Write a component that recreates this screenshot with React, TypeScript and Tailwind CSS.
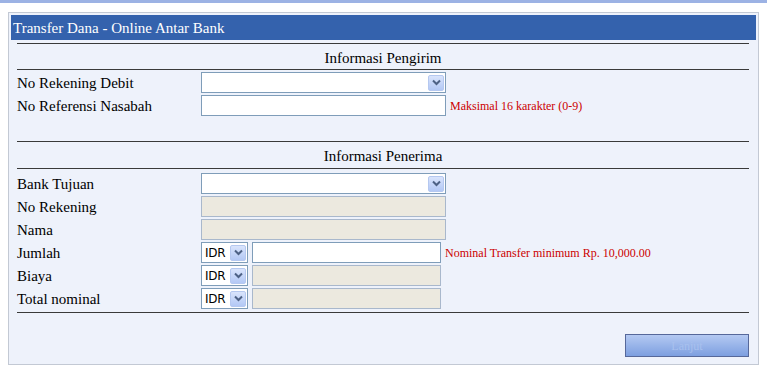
import React from "react";

function Arrow() {
  return (
    <div className="w-[16px] h-[16px] rounded-[2px] border border-[#b5c8f0] bg-gradient-to-b from-[#d9e4fc] to-[#b3c8f5] flex items-center justify-center">
      <svg width="9" height="7" viewBox="0 0 9 7">
        <path d="M1 1.5 L4.5 5 L8 1.5" fill="none" stroke="#4d6185" strokeWidth="2" />
      </svg>
    </div>
  );
}

function Select({ w, text }: { w: string; text?: string }) {
  return (
    <div className={`${w} h-[21px] border border-[#7f9db9] bg-white flex items-center justify-between pl-[3px] pr-[1px]`}>
      <span className="text-[12px] text-black font-['DejaVu_Sans',sans-serif] tracking-[-0.3px]">{text}</span>
      <Arrow />
    </div>
  );
}

function Input({ w, disabled }: { w: string; disabled?: boolean }) {
  return (
    <div
      className={`${w} h-[21px] border ${disabled ? "border-[#a9b8cc] bg-[#ece9df]" : "border-[#7f9db9] bg-white"}`}
    />
  );
}

function Row({ label, children }: { label: string; children: React.ReactNode }) {
  return (
    <div className="h-[23px] flex items-center">
      <div className="w-[184px] text-[15px] text-black leading-none pt-[1px]">{label}</div>
      <div className="flex items-center">{children}</div>
    </div>
  );
}

function Line() {
  return <div className="h-px bg-[#3a3a3a]" />;
}

function Title({ text }: { text: string }) {
  return (
    <div className="h-[25px] flex items-center justify-center text-[15px] text-black pt-[3px]">{text}</div>
  );
}

function Note({ text }: { text: string }) {
  return <span className="ml-[4px] text-[12px] text-[#cc0000] whitespace-nowrap">{text}</span>;
}

export default function App() {
  return (
    <div className="w-[767px] h-[372px] bg-white overflow-hidden font-['Liberation_Serif','Times_New_Roman',serif]">
      <div className="h-[3px] bg-[#9cb2e4]" />
      <div className="ml-[8px] mt-[9px] w-[751px] h-[353px] border border-[#c3c9d4] bg-[#eef2fb] p-[2px]">
        <div className="h-[25px] bg-[#3462ad] flex items-center pl-[2px] pt-[1px] text-[15px] text-white">
          Transfer Dana - Online Antar Bank
        </div>
        <div className="pl-[6px] pr-[7px] pt-[3px]">
          <Line />
          <Title text="Informasi Pengirim" />
          <Line />
          <div className="pt-[1px]">
            <Row label="No Rekening Debit">
              <Select w="w-[245px]" />
            </Row>
            <Row label="No Referensi Nasabah">
              <Input w="w-[245px]" />
              <Note text="Maksimal 16 karakter (0-9)" />
            </Row>
          </div>
          <div className="h-[24px]" />
          <Line />
          <Title text="Informasi Penerima" />
          <div className="pt-[1px]">
            <Line />
          </div>
          <div className="pt-[3px]">
            <Row label="Bank Tujuan">
              <Select w="w-[245px]" />
            </Row>
            <Row label="No Rekening">
              <Input w="w-[245px]" disabled />
            </Row>
            <Row label="Nama">
              <Input w="w-[245px]" disabled />
            </Row>
            <Row label="Jumlah">
              <Select w="w-[47px]" text="IDR" />
              <div className="ml-[4px]">
                <Input w="w-[189px]" />
              </div>
              <Note text="Nominal Transfer minimum Rp. 10,000.00" />
            </Row>
            <Row label="Biaya">
              <Select w="w-[47px]" text="IDR" />
              <div className="ml-[4px]">
                <Input w="w-[189px]" disabled />
              </div>
            </Row>
            <Row label="Total nominal">
              <Select w="w-[47px]" text="IDR" />
              <div className="ml-[4px]">
                <Input w="w-[189px]" disabled />
              </div>
            </Row>
          </div>
          <div className="mt-[2px]">
            <Line />
          </div>
          <div className="flex justify-end mt-[21px]">
            <div className="w-[124px] h-[23px] border border-[#56689a] bg-gradient-to-b from-[#b4c9f2] to-[#7d9fe0] flex items-center justify-center text-[12px] text-[#a8c0ee]">
              Lanjut
            </div>
          </div>
        </div>
      </div>
    </div>
  );
}
